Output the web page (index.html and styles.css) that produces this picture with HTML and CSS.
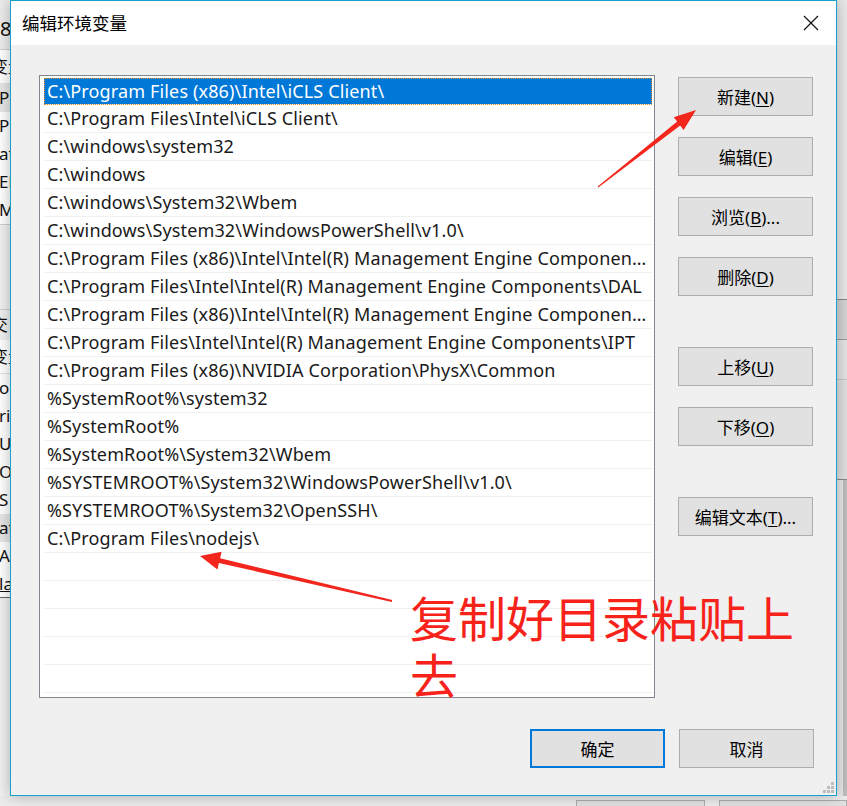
FILE: index.html
```html
<!DOCTYPE html>
<html lang="zh-CN">
<head>
<meta charset="utf-8">
<title>编辑环境变量</title>
<link rel="stylesheet" href="styles.css">
</head>
<body>
<div class="desktop">
  <div class="bgwin bgwin-left">
    <div class="bg-title">8</div>
    <div class="bg-head">变量</div>
    <div class="bg-row sel">Pr</div>
    <div class="bg-row">Pr</div>
    <div class="bg-row">at</div>
    <div class="bg-row">El</div>
    <div class="bg-row">M</div>
    <div class="bg-gap"></div>
    <div class="bg-head2">交</div>
    <div class="bg-head">变量</div>
    <div class="bg-row">o</div>
    <div class="bg-row">ri</div>
    <div class="bg-row">U</div>
    <div class="bg-row">Or</div>
    <div class="bg-row">S</div>
    <div class="bg-row sel">at</div>
    <div class="bg-row">A</div>
    <div class="bg-row ul">la</div>
  </div>
  <div class="bgwin bgwin-right">
    <div class="rs-a"></div>
    <div class="rs-b"></div>
    <div class="rs-c"></div>
    <div class="rs-d"></div>
    <div class="rs-e"></div>
  </div>
  <div class="bg-bottom">
    <div class="bg-btn"></div>
    <div class="bg-btn"></div>
  </div>

  <div class="dialog">
    <div class="titlebar">
      <span class="title">编辑环境变量</span>
      <svg class="close" width="16" height="16" viewBox="0 0 16 16"><path d="M1 1 L15 15 M15 1 L1 15" stroke="#111" stroke-width="1.2" fill="none"/></svg>
    </div>
    <div class="body">
      <div class="main">
        <div class="list">
          <div class="row selected">C:\Program Files (x86)\Intel\iCLS Client\</div>
          <div class="row">C:\Program Files\Intel\iCLS Client\</div>
          <div class="row">C:\windows\system32</div>
          <div class="row">C:\windows</div>
          <div class="row">C:\windows\System32\Wbem</div>
          <div class="row">C:\windows\System32\WindowsPowerShell\v1.0\</div>
          <div class="row">C:\Program Files (x86)\Intel\Intel(R) Management Engine Components\DAL</div>
          <div class="row">C:\Program Files\Intel\Intel(R) Management Engine Components\DAL</div>
          <div class="row">C:\Program Files (x86)\Intel\Intel(R) Management Engine Components\IPT</div>
          <div class="row">C:\Program Files\Intel\Intel(R) Management Engine Components\IPT</div>
          <div class="row">C:\Program Files (x86)\NVIDIA Corporation\PhysX\Common</div>
          <div class="row">%SystemRoot%\system32</div>
          <div class="row">%SystemRoot%</div>
          <div class="row">%SystemRoot%\System32\Wbem</div>
          <div class="row">%SYSTEMROOT%\System32\WindowsPowerShell\v1.0\</div>
          <div class="row">%SYSTEMROOT%\System32\OpenSSH\</div>
          <div class="row">C:\Program Files\nodejs\</div>
          <div class="row"></div>
          <div class="row"></div>
          <div class="row"></div>
          <div class="row"></div>
          <div class="row"></div>
        </div>
        <div class="side">
          <button class="btn">新建(<u>N</u>)</button>
          <button class="btn">编辑(<u>E</u>)</button>
          <button class="btn">浏览(<u>B</u>)...</button>
          <button class="btn">删除(<u>D</u>)</button>
          <button class="btn gap-l">上移(<u>U</u>)</button>
          <button class="btn">下移(<u>O</u>)</button>
          <button class="btn gap-l">编辑文本(<u>T</u>)...</button>
        </div>
      </div>
      <div class="footer">
        <button class="btn primary">确定</button>
        <button class="btn">取消</button>
      </div>
      <svg class="grip" width="12" height="12" viewBox="0 0 12 12">
        <rect x="8" y="0" width="3" height="3" fill="#bcbcbc"/>
        <rect x="4" y="4" width="3" height="3" fill="#bcbcbc"/>
        <rect x="8" y="4" width="3" height="3" fill="#bcbcbc"/>
        <rect x="0" y="8" width="3" height="3" fill="#bcbcbc"/>
        <rect x="4" y="8" width="3" height="3" fill="#bcbcbc"/>
        <rect x="8" y="8" width="3" height="3" fill="#bcbcbc"/>
      </svg>
    </div>
  </div>

  <svg class="arrows" width="847" height="806" viewBox="0 0 847 806">
    <polygon fill="#f2261c" points="598.3,187.4 680.2,125.6 683.6,129.9 696,110 673.8,117.3 677.2,121.6 597.7,186.6"/>
    <polygon fill="#f2261c" points="392.2,600 220.1,558.2 221.6,551.8 200,556 217.4,569.4 218.9,563 391.8,602"/>
  </svg>
  <div class="note">复制好目录粘贴上去</div>
</div>
</body>
</html>
```

FILE: styles.css
```css
* { box-sizing: border-box; }
html, body { margin: 0; padding: 0; }
body {
  width: 847px;
  height: 806px;
  overflow: hidden;
  background: #e6e6e6;
  font-family: "Noto Sans", "Noto Sans CJK SC", sans-serif;
}
.desktop {
  position: relative;
  width: 847px;
  height: 806px;
  overflow: hidden;
}

/* background windows */
.bgwin { position: absolute; top: 0; overflow: hidden; }
.bgwin-left {
  left: 0; width: 12px; height: 806px;
  background: #f0f0f0;
  font-family: "Noto Sans", "Noto Sans CJK SC", sans-serif;
  font-size: 17px;
  color: #111;
  white-space: nowrap;
}
.bg-title { height: 50px; padding-top: 16px; line-height: 26px; background: #ececec; font-size: 20px; border-bottom: 1px solid #d0d0d0; }
.bg-head { height: 34px; line-height: 34px; margin-left: -9px; width: 60px; background: #fff; border-bottom: 1px solid #e4e4e4; overflow: hidden; }
.bg-head2 { height: 30px; line-height: 30px; margin-left: -9px; width: 60px; background: #f0f0f0; overflow: hidden; }
.bg-row { height: 28px; line-height: 28px; background: #fff; margin-left: -1px; width: 60px; overflow: hidden; }
.bg-row.sel { background: #e6e6e6; }
.bg-row.ul { text-decoration: underline; border-bottom: 1px solid #666; }
.bg-gap { height: 86px; background: #f0f0f0; border-top: 1px solid #cfcfcf; border-bottom: 1px solid #cfcfcf; }

.bgwin-right {
  right: 0; width: 11px; height: 806px;
  background: linear-gradient(to right, #e2e2e2, #ececec);
}
.rs-a { height: 300px; background: #e9e9e9; border-bottom: 1px solid #8a8a8a; }
.rs-b { height: 40px; background: #d4d4d4; border-bottom: 1px solid #9a9a9a; }
.rs-c { height: 40px; background: #e4e4e4; border-bottom: 1px solid #c8c8c8; }
.rs-d { height: 100px; background: #e0e0e0; border-bottom: 1px solid #8a8a8a; }
.rs-e { height: 324px; background: linear-gradient(to right, #e8e8e8 60%, #bdbdbd 60%); }

.bg-bottom {
  position: absolute; left: 0; top: 796px; width: 847px; height: 10px;
  background: #ececec;
  display: flex; gap: 14px; padding-left: 576px;
}
.bg-btn { width: 136px; height: 20px; margin-top: 4px; border: 1px solid #adadad; background: #e1e1e1; }

/* dialog */
.dialog {
  position: absolute;
  left: 10px; top: 0;
  width: 827px; height: 796px;
  border: 1px solid #1aa1c9;
  background: #f0f0f0;
  box-shadow: 0 0 14px rgba(0,0,0,0.28);
  display: flex; flex-direction: column;
  font-family: "Noto Sans", "Noto Sans CJK SC", sans-serif;
  font-size: 17px;
  color: #000;
}
.titlebar {
  height: 44px;
  background: #fff;
  display: flex; align-items: center; justify-content: space-between;
  padding: 0 17px 0 11px;
}
.title { font-size: 17.5px; color: #000; padding-bottom: 2px; }
.close { display: block; }

.body {
  position: relative;
  flex: 1;
  padding: 30px 22px 0 28px;
  display: flex; flex-direction: column;
}
.main { display: flex; gap: 23px; align-items: flex-start; }
.list {
  width: 616px; height: 623px;
  background: #fff;
  border: 1px solid #828790;
  padding: 2px 2px 0 4px;
  overflow: hidden;
}
.row {
  height: 28px;
  border-bottom: 1px solid #f0f0f0;
  padding: 0 2px 0 3px;
  line-height: 26px;
  white-space: nowrap;
  overflow: hidden;
  text-overflow: ellipsis;
  color: #1a1a1a;
  width: 608px;
  font-size: 18px;
  letter-spacing: 0.14px;
}
.row.selected {
  height: 27px;
  background: #0078d7;
  color: #fff;
  outline: 1px dotted #e08a2a;
  outline-offset: -1px;
}

.side { display: flex; flex-direction: column; gap: 21px; padding-top: 2px; }
.btn {
  width: 135px; height: 39px;
  background: #e1e1e1;
  border: 1px solid #adadad;
  font-family: "Noto Sans", "Noto Sans CJK SC", sans-serif;
  font-size: 17px;
  color: #000;
  padding: 0;
  margin: 0;
}
.btn u { text-decoration: underline; text-underline-offset: 2px; }
.btn.gap-l { margin-top: 30px; }
.footer {
  display: flex; justify-content: flex-end; gap: 14px;
  margin-top: 31px;
}
.btn.primary { border: 2px solid #0078d7; }
.grip { position: absolute; right: 1px; bottom: 1px; }

/* annotations */
.arrows { position: absolute; left: 0; top: 0; pointer-events: none; }
.note {
  position: absolute;
  left: 410px; top: 588px;
  width: 400px;
  font-family: "Noto Sans CJK SC", sans-serif;
  font-size: 48px;
  line-height: 57px;
  color: #f7221a;
}
```
